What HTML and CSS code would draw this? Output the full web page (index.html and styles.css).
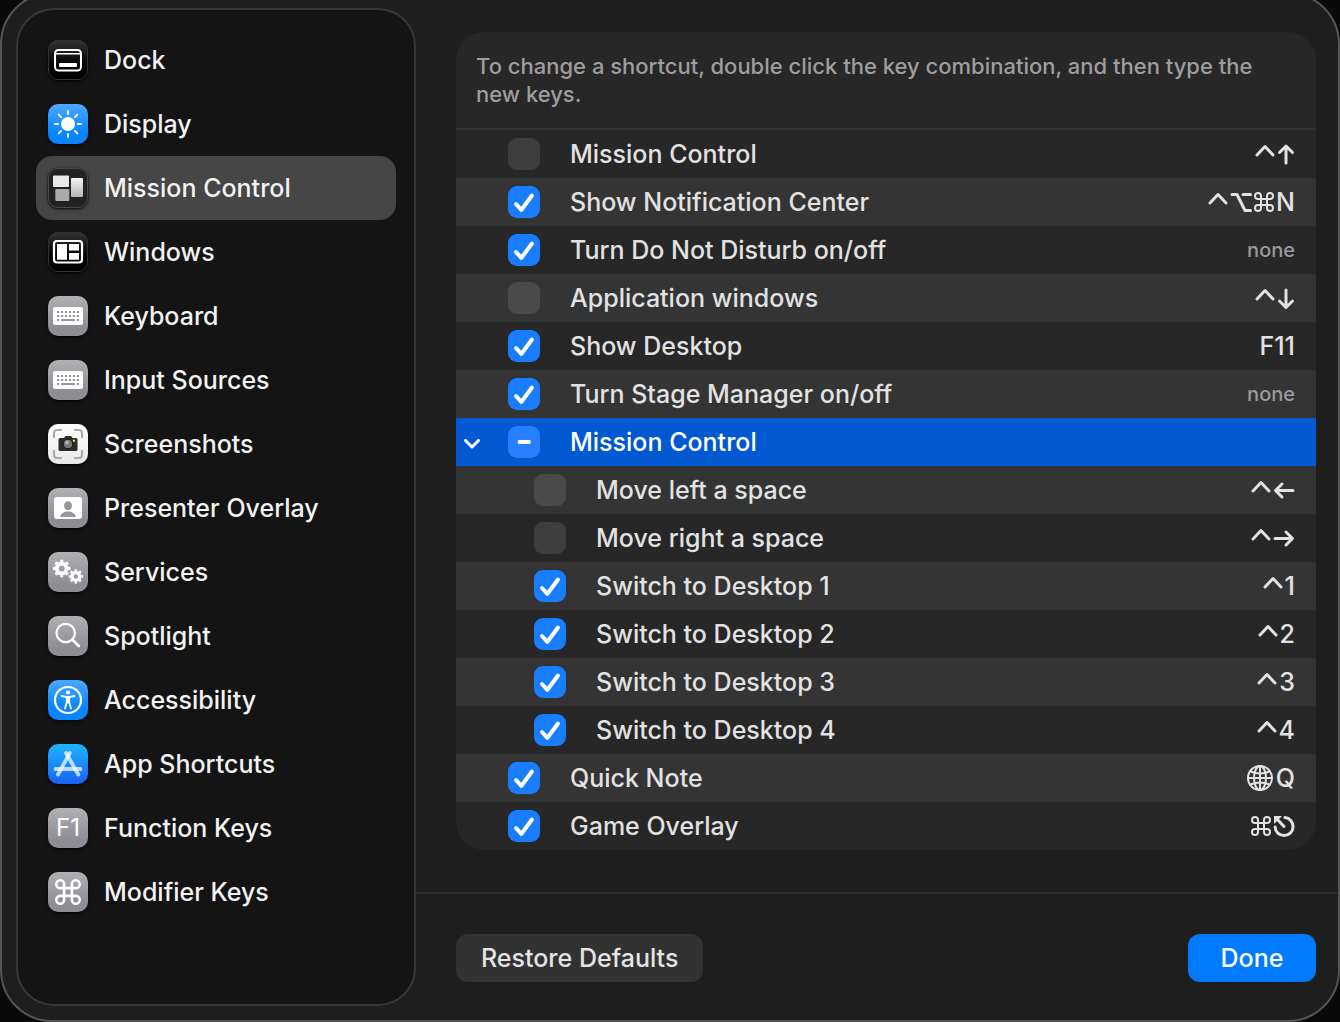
FILE: index.html
```html
<!DOCTYPE html>
<html lang="en">
<head>
    <meta charset="UTF-8">
    <meta name="viewport" content="width=device-width, initial-scale=1.0">
    <title>Keyboard Shortcuts</title>
    <link rel="stylesheet" href="styles.css">
</head>
<body>
    <!-- Shared key symbols -->
    <svg class="symbols" aria-hidden="true">
        <symbol id="ctrl" viewBox="0 0 20 24"><path d="M2 13l8-8.500 8 8.500"/></symbol>
        <symbol id="up" viewBox="0 0 18 24"><path d="M9 21V4.500M2.500 10.500L9 4l6.500 6.500"/></symbol>
        <symbol id="down" viewBox="0 0 18 24"><path d="M9 4v17M2.500 15L9 21.500l6.500-6.500"/></symbol>
        <symbol id="left" viewBox="0 0 22 24"><path d="M20 12.500H3M9 6l-6.500 6.500L9 19"/></symbol>
        <symbol id="right" viewBox="0 0 22 24"><path d="M2 12.500h17M13 6l6.500 6.500L13 19"/></symbol>
        <symbol id="option" viewBox="0 0 22 24"><path d="M2 4.500h5l8 16h5.500M13 4.500h7.500"/></symbol>
        <symbol id="cmd" viewBox="2 2 20 20"><path d="M15 6v12a3 3 0 1 0 3-3H6a3 3 0 1 0 3 3V6a3 3 0 1 0-3 3h12a3 3 0 1 0-3-3"/></symbol>
        <symbol id="globe" viewBox="0 0 28 28"><circle cx="14" cy="14" r="12"/><ellipse cx="14" cy="14" rx="6" ry="12"/><path d="M14 2v24M2 14h24M4.500 7.500q9.500 4 19 0M4.500 20.500q9.500-4 19 0"/></symbol>
        <symbol id="esc" viewBox="0 0 22 24"><path d="M12 3.600a9 9 0 1 1-9.900 9.400M4.500 5.500l6.500 7"/><path class="solid" d="M1 2h8l-8 8z"/></symbol>
        <symbol id="keyboard" viewBox="0 0 40 40">
            <rect x="5" y="11" width="30" height="18" rx="2.500" fill="#fff"/>
            <path d="M9 16h22M9 20h22" fill="none" stroke="#98979c" stroke-width="2" stroke-dasharray="2.200 1.760"/>
            <path d="M9 24h2.200M13 24h14M28.800 24H31" fill="none" stroke="#98979c" stroke-width="2"/>
        </symbol>
    </svg>

    <div class="window">
        <nav class="sidebar">
            <ul>
                <li><a href="#"><svg class="icon black" viewBox="0 0 40 40"><rect x="7" y="10" width="26" height="20.500" rx="3.500" fill="none" stroke="#fff" stroke-width="2"/><path d="M7 13.800h26" stroke="#fff" stroke-width="1.500"/><rect x="11" y="23" width="18" height="4" rx="1" fill="#fff"/></svg>Dock</a></li>
                <li><a href="#"><svg class="icon blue" viewBox="0 0 40 40"><circle cx="20" cy="20" r="7" fill="#fff"/><path d="M20 7v3M20 30v3M7 20h3M30 20h3M10.800 10.800l2.200 2.200M27 27l2.200 2.200M10.800 29.200l2.200-2.200M27 13l2.200-2.200" stroke="#fff" stroke-width="2" stroke-linecap="round"/></svg>Display</a></li>
                <li><a href="#" class="active"><svg class="icon dark" viewBox="0 0 40 40"><defs><linearGradient id="tile" x1="0" y1="0" x2="0" y2="1"><stop offset="0" stop-color="#f4f4f4"/><stop offset="1" stop-color="#b4b4b4"/></linearGradient></defs><rect x="5" y="7.500" width="16" height="11.500" rx="1" fill="#e8e8e8"/><rect x="7.300" y="21" width="14" height="12" rx="1" fill="#aaa"/><rect x="23" y="10" width="12" height="19" rx="1" fill="url(#tile)"/></svg>Mission Control</a></li>
                <li><a href="#"><svg class="icon black" viewBox="0 0 40 40"><rect x="6" y="9" width="28" height="21.500" rx="3" fill="none" stroke="#fff" stroke-width="2.200"/><path d="M9 12h10v15.700H9zM21 12h10v6.500H21zM21 21h10v6.700H21z" fill="#fff"/></svg>Windows</a></li>
                <li><a href="#"><svg class="icon gray"><use href="#keyboard"/></svg>Keyboard</a></li>
                <li><a href="#"><svg class="icon gray"><use href="#keyboard"/></svg>Input Sources</a></li>
                <li><a href="#"><svg class="icon white" viewBox="0 0 40 40"><path d="M6 14V9q0-3 3-3h5M26 6h5q3 0 3 3v5M34 26v5q0 3-3 3h-5M14 34H9q-3 0-3-3v-5" fill="none" stroke="#a9a9a9" stroke-width="2"/><path d="M12 14h4l1.500-2h5.500l1.500 2H28q1.500 0 1.500 1.500v10q0 1.500-1.500 1.500H12q-1.500 0-1.500-1.500v-10q0-1.500 1.500-1.500z" fill="#2b2b2b"/><circle cx="20" cy="20" r="4.800" fill="#777" stroke="#111"/><circle cx="19" cy="18.500" r="2" fill="#aaa"/><circle cx="26" cy="16.700" r="1.200" fill="#ffd60a"/></svg>Screenshots</a></li>
                <li><a href="#"><svg class="icon gray" viewBox="0 0 40 40"><rect x="6" y="9" width="28" height="22" rx="3" fill="#fff"/><ellipse cx="20" cy="17.700" rx="4" ry="4.500" fill="#98979c"/><path d="M12 29q1.500-5.500 8-5.500t8 5.500z" fill="#98979c"/></svg>Presenter Overlay</a></li>
                <li><a href="#"><svg class="icon gray" viewBox="0 0 40 40"><g fill="none" stroke="#fff"><circle cx="13.700" cy="16.500" r="4.900" stroke-width="4"/><circle cx="13.700" cy="16.500" r="7.600" stroke-width="2.400" pathLength="16" stroke-dasharray="1 1" stroke-dashoffset=".5"/><circle cx="27.800" cy="24.400" r="3.900" stroke-width="3.400"/><circle cx="27.800" cy="24.400" r="6.200" stroke-width="2" pathLength="16" stroke-dasharray="1 1" stroke-dashoffset=".5"/></g></svg>Services</a></li>
                <li><a href="#"><svg class="icon gray" viewBox="0 0 40 40"><g fill="none" stroke="#fff" stroke-width="2.200" stroke-linecap="round"><circle cx="17.700" cy="17" r="9.200"/><path d="M24.500 23.700l6.300 6.300" stroke-width="2.800"/></g></svg>Spotlight</a></li>
                <li><a href="#"><svg class="icon blue" viewBox="0 0 40 40"><circle cx="20" cy="20" r="13" fill="none" stroke="#fff" stroke-width="2.200"/><circle cx="20" cy="12.500" r="2" fill="#fff"/><path d="M13.500 16l5 1h3l5-1M18.800 17v5l-1.800 6.500M21.200 17v5l1.800 6.500M20 17v5.500" fill="none" stroke="#fff" stroke-width="1.800" stroke-linecap="round" stroke-linejoin="round"/></svg>Accessibility</a></li>
                <li><a href="#"><svg class="icon store" viewBox="0 0 40 40"><g fill="none" stroke="#fff" stroke-width="3.800" stroke-linecap="round" stroke-opacity=".7"><path d="M21.800 9L10 30.500"/><path d="M18 9l12.300 21.500"/><path d="M7.500 25h25"/></g></svg>App Shortcuts</a></li>
                <li><a href="#"><span class="icon gray letters" aria-hidden="true">F1</span>Function Keys</a></li>
                <li><a href="#"><svg class="icon gray command" viewBox="0 0 40 40"><use href="#cmd" x="7" y="7" width="26" height="26"/></svg>Modifier Keys</a></li>
            </ul>
        </nav>

        <main>
            <div class="content">
                <section class="panel">
                    <p class="hint">To change a shortcut, double click the key combination, and then type the new keys.</p>
                    <table>
                        <tbody>
                            <tr>
                                <td><label><input type="checkbox">Mission Control</label></td>
                                <td><span class="keys"><svg class="k20"><use href="#ctrl"/></svg><svg class="k18"><use href="#up"/></svg></span></td>
                            </tr>
                            <tr>
                                <td><label><input type="checkbox" checked>Show Notification Center</label></td>
                                <td><span class="keys"><svg class="k20"><use href="#ctrl"/></svg><svg class="k22"><use href="#option"/></svg><svg class="k20 cmd"><use href="#cmd"/></svg>N</span></td>
                            </tr>
                            <tr>
                                <td><label><input type="checkbox" checked>Turn Do Not Disturb on/off</label></td>
                                <td><span class="keys none">none</span></td>
                            </tr>
                            <tr>
                                <td><label><input type="checkbox">Application windows</label></td>
                                <td><span class="keys"><svg class="k20"><use href="#ctrl"/></svg><svg class="k18"><use href="#down"/></svg></span></td>
                            </tr>
                            <tr>
                                <td><label><input type="checkbox" checked>Show Desktop</label></td>
                                <td><span class="keys">F11</span></td>
                            </tr>
                            <tr>
                                <td><label><input type="checkbox" checked>Turn Stage Manager on/off</label></td>
                                <td><span class="keys none">none</span></td>
                            </tr>
                            <tr class="selected">
                                <td>
                                    <button class="disclosure" aria-label="Collapse Mission Control"><svg viewBox="0 0 16 10"><path d="M1.500 1.500L8 8l6.500-6.500"/></svg></button>
                                    <label><input type="checkbox" id="group">Mission Control</label>
                                </td>
                                <td></td>
                            </tr>
                            <tr class="child">
                                <td><label><input type="checkbox">Move left a space</label></td>
                                <td><span class="keys"><svg class="k20"><use href="#ctrl"/></svg><svg class="k22"><use href="#left"/></svg></span></td>
                            </tr>
                            <tr class="child">
                                <td><label><input type="checkbox">Move right a space</label></td>
                                <td><span class="keys"><svg class="k20"><use href="#ctrl"/></svg><svg class="k22"><use href="#right"/></svg></span></td>
                            </tr>
                            <tr class="child">
                                <td><label><input type="checkbox" checked>Switch to Desktop 1</label></td>
                                <td><span class="keys"><svg class="k20"><use href="#ctrl"/></svg>1</span></td>
                            </tr>
                            <tr class="child">
                                <td><label><input type="checkbox" checked>Switch to Desktop 2</label></td>
                                <td><span class="keys"><svg class="k20"><use href="#ctrl"/></svg>2</span></td>
                            </tr>
                            <tr class="child">
                                <td><label><input type="checkbox" checked>Switch to Desktop 3</label></td>
                                <td><span class="keys"><svg class="k20"><use href="#ctrl"/></svg>3</span></td>
                            </tr>
                            <tr class="child">
                                <td><label><input type="checkbox" checked>Switch to Desktop 4</label></td>
                                <td><span class="keys"><svg class="k20"><use href="#ctrl"/></svg>4</span></td>
                            </tr>
                            <tr>
                                <td><label><input type="checkbox" checked>Quick Note</label></td>
                                <td><span class="keys"><svg class="k28"><use href="#globe"/></svg>Q</span></td>
                            </tr>
                            <tr>
                                <td><label><input type="checkbox" checked>Game Overlay</label></td>
                                <td><span class="keys"><svg class="k20 cmd"><use href="#cmd"/></svg><svg class="k22"><use href="#esc"/></svg></span></td>
                            </tr>
                        </tbody>
                    </table>
                </section>
            </div>
            <footer>
                <button class="btn">Restore Defaults</button>
                <button class="btn primary">Done</button>
            </footer>
        </main>
    </div>

    <script>
        // Some of the children are on, some are off
        document.getElementById('group').indeterminate = true;
    </script>
</body>
</html>
```
FILE: styles.css
```css
* {
    box-sizing: border-box;
}
body {
    margin: 0;
    background: #0a0a0a;
    color: #f2f2f2;
    font-family: Inter, "Liberation Sans", sans-serif;
    font-size: 25px;
    font-weight: 500;
    line-height: 32px;
    overflow: hidden;
}
.symbols {
    display: none;
}
.window {
    display: flex;
    min-height: calc(100vh + 8px);
    margin-top: -8px;
    background: #1e1e1e;
    border: 2px solid #555;
    border-radius: 52px;
}

/* Sidebar */
.sidebar {
    flex: 0 0 400px;
    margin: 14px 0 14px 14px;
    padding: 18px;
    background: #141414;
    border: 2px solid #383838;
    border-radius: 38px;
}
.sidebar ul {
    list-style: none;
    margin: 0;
    padding: 0;
}
.sidebar a {
    display: flex;
    align-items: center;
    gap: 16px;
    height: 64px;
    padding: 0 12px;
    border-radius: 16px;
    color: inherit;
    text-decoration: none;
}
.sidebar a.active {
    background: #464646;
}
.icon {
    flex: none;
    width: 40px;
    height: 40px;
    border-radius: 10px;
    box-shadow: 0 1px 3px #000;
}
.black {
    background: linear-gradient(#333, #000 65%);
    outline: 1px solid #333;
    outline-offset: -1px;
}
.dark {
    background: #222;
    outline: 1px solid #4a4a4a;
    outline-offset: -1px;
}
.blue {
    background: linear-gradient(#4aa8ff, #0a84ff 70%);
}
.gray {
    background: linear-gradient(#b0afb4, #8e8d93 80%);
}
.white {
    background: linear-gradient(#fff, #e8e8e8);
}
.store {
    background: linear-gradient(#1fb4ff, #1a62f2);
}
.letters {
    color: #fff;
    font-size: 24px;
    font-weight: 400;
    line-height: 40px;
    text-align: center;
}
.command {
    fill: none;
    stroke: #fff;
    stroke-width: 2;
}

/* Shortcut list */
main {
    flex: 1;
    display: flex;
    flex-direction: column;
}
.content {
    flex: 1;
    padding: 38px 22px 40px 40px;
}
.panel {
    background: #272727;
    border-radius: 28px;
    overflow: hidden;
}
.hint {
    margin: 0;
    padding: 20px;
    border-bottom: 2px solid #333;
    color: #9e9e9e;
    font-size: 22px;
    line-height: 28px;
}
table {
    width: 100%;
    border-collapse: collapse;
}
tr {
    height: 48px;
    color: #e2e2e2;
}
tr:nth-child(even) {
    background: #343434;
}
tr.selected {
    background: #0059d1;
    color: #fff;
}
td {
    position: relative;
    padding: 0 21px 0 52px;
}
tr.child td {
    padding-left: 78px;
}
label {
    display: flex;
    align-items: center;
    gap: 30px;
}
input[type="checkbox"] {
    appearance: none;
    flex: none;
    width: 32px;
    height: 32px;
    margin: 0;
    border-radius: 9px;
    background: rgba(255, 255, 255, 0.11) center / 32px no-repeat;
}
input[type="checkbox"]:checked {
    background-color: #187dff;
    background-image: url("data:image/svg+xml,%3Csvg xmlns='http://www.w3.org/2000/svg' viewBox='0 0 32 32'%3E%3Cpath d='M8 18l5.400 5.800L24 9.500' fill='none' stroke='white' stroke-width='4' stroke-linecap='round' stroke-linejoin='round'/%3E%3C/svg%3E");
}
input[type="checkbox"]:indeterminate {
    background-color: #2680ff;
    background-image: url("data:image/svg+xml,%3Csvg xmlns='http://www.w3.org/2000/svg' viewBox='0 0 32 32'%3E%3Cpath d='M11.500 16h9.500' stroke='white' stroke-width='3.800' stroke-linecap='round'/%3E%3C/svg%3E");
}
.disclosure {
    position: absolute;
    left: 8px;
    top: 16px;
    display: flex;
    align-items: center;
    width: 16px;
    height: 20px;
    padding: 0;
    border: 0;
    background: none;
}
.disclosure svg {
    width: 16px;
    height: 10px;
    fill: none;
    stroke: #fff;
    stroke-width: 3;
    stroke-linecap: round;
    stroke-linejoin: round;
}
.keys {
    display: flex;
    justify-content: flex-end;
    align-items: center;
    gap: 2px;
}
.keys svg {
    height: 24px;
    fill: none;
    stroke: currentColor;
    stroke-width: 3;
    stroke-linecap: round;
    stroke-linejoin: round;
}
.k18 {
    width: 18px;
}
.k20 {
    width: 20px;
}
.k22 {
    width: 22px;
}
.keys svg.cmd {
    height: 20px;
    stroke-width: 2;
}
.keys svg.k28 {
    width: 28px;
    height: 28px;
    stroke-width: 2;
}
.solid {
    fill: currentColor;
    stroke: none;
}
.none {
    color: #9a9a9a;
    font-size: 20px;
}

/* Footer */
footer {
    display: flex;
    justify-content: space-between;
    padding: 40px 22px 38px 40px;
    border-top: 2px solid #2d2d2d;
}
.btn {
    min-width: 128px;
    height: 48px;
    padding: 0 25px;
    border: 0;
    border-radius: 12px;
    background: #323232;
    color: #e4e4e4;
    font: inherit;
}
.btn.primary {
    background: #007aff;
    color: #fff;
}
```
